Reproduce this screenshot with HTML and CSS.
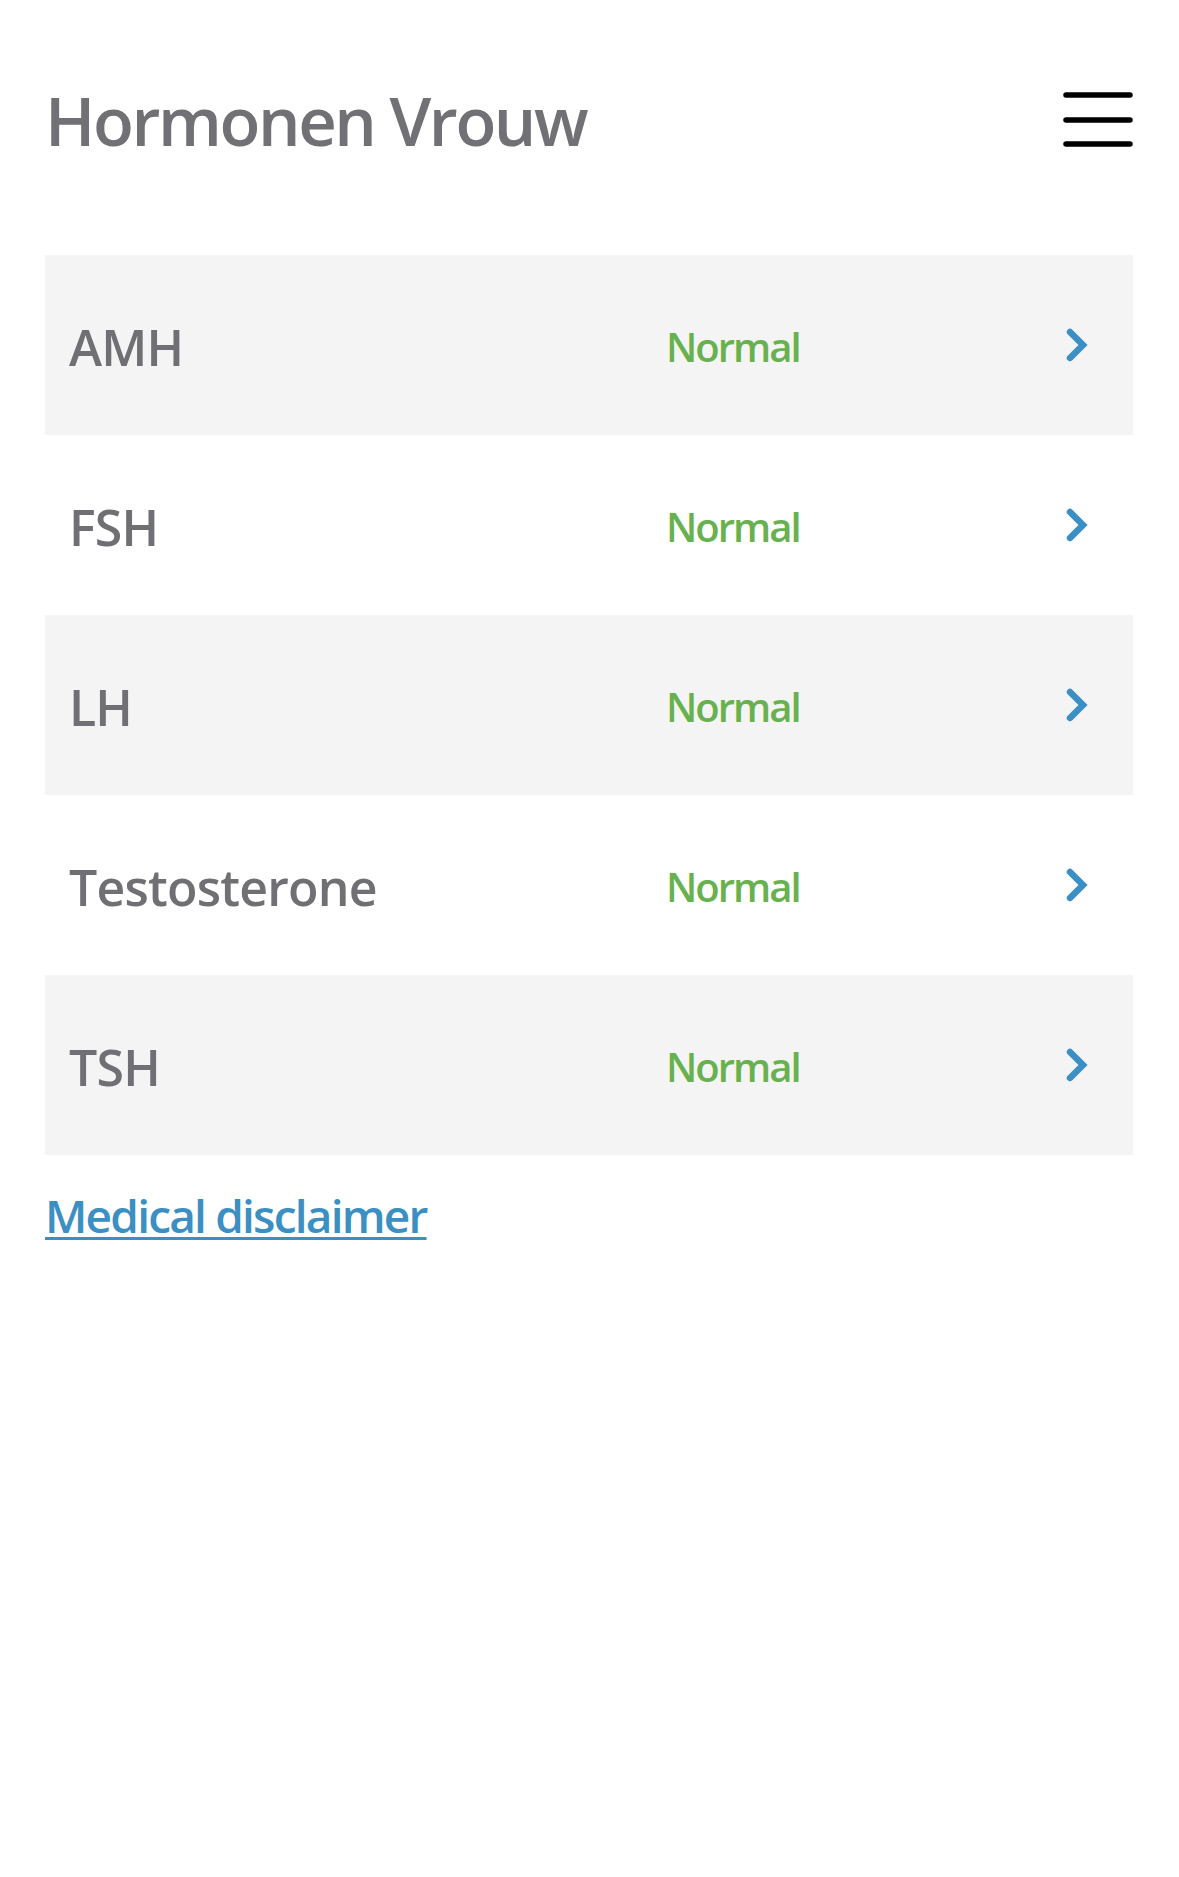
FILE: index.html
```html
<!DOCTYPE html>
<html lang="nl">
<head>
<meta charset="utf-8">
<title>Hormonen Vrouw</title>
<link rel="stylesheet" href="styles.css">
</head>
<body>
<div class="page">
  <header class="header">
    <h1 class="title">Hormonen Vrouw</h1>
    <button class="menu" aria-label="Menu">
      <svg width="70" height="60" viewBox="0 0 70 60">
        <g stroke="#000" stroke-width="5.5" stroke-linecap="round">
          <line x1="3" y1="6" x2="67" y2="6"/>
          <line x1="3" y1="31" x2="67" y2="31"/>
          <line x1="3" y1="55" x2="67" y2="55"/>
        </g>
      </svg>
    </button>
  </header>
  <ul class="list">
    <li class="row shaded"><span class="name">AMH</span><span class="status">Normal</span><svg class="chev" width="22" height="34" viewBox="0 0 22 34"><polyline points="4,4 17,17 4,30" fill="none" stroke="#3a8fc4" stroke-width="6.5" stroke-linecap="round" stroke-linejoin="miter"/></svg></li>
    <li class="row"><span class="name">FSH</span><span class="status">Normal</span><svg class="chev" width="22" height="34" viewBox="0 0 22 34"><polyline points="4,4 17,17 4,30" fill="none" stroke="#3a8fc4" stroke-width="6.5" stroke-linecap="round" stroke-linejoin="miter"/></svg></li>
    <li class="row shaded"><span class="name">LH</span><span class="status">Normal</span><svg class="chev" width="22" height="34" viewBox="0 0 22 34"><polyline points="4,4 17,17 4,30" fill="none" stroke="#3a8fc4" stroke-width="6.5" stroke-linecap="round" stroke-linejoin="miter"/></svg></li>
    <li class="row"><span class="name">Testosterone</span><span class="status">Normal</span><svg class="chev" width="22" height="34" viewBox="0 0 22 34"><polyline points="4,4 17,17 4,30" fill="none" stroke="#3a8fc4" stroke-width="6.5" stroke-linecap="round" stroke-linejoin="miter"/></svg></li>
    <li class="row shaded"><span class="name">TSH</span><span class="status">Normal</span><svg class="chev" width="22" height="34" viewBox="0 0 22 34"><polyline points="4,4 17,17 4,30" fill="none" stroke="#3a8fc4" stroke-width="6.5" stroke-linecap="round" stroke-linejoin="miter"/></svg></li>
  </ul>
  <a class="disclaimer" href="#">Medical disclaimer</a>
</div>
</body>
</html>
```
FILE: styles.css
```css
html, body {
  margin: 0;
  padding: 0;
  background: #ffffff;
}
body {
  font-family: "Open Sans", "Noto Sans", sans-serif;
  width: 1179px;
  height: 1877px;
}
.page {
  padding: 80px 46px 0 45px;
}
.header {
  display: flex;
  justify-content: space-between;
  align-items: flex-start;
  height: 175px;
}
.title {
  margin: 0;
  font-size: 67px;
  line-height: 80px;
  font-weight: 600;
  color: #717175;
  letter-spacing: -2.4px;
}
.menu {
  border: 0;
  padding: 0;
  margin: 9px 0 0 0;
  background: none;
  display: block;
  width: 70px;
  height: 60px;
}
.menu svg { display: block; }
.list {
  list-style: none;
  margin: 0;
  padding: 0;
}
.row {
  box-sizing: border-box;
  display: grid;
  grid-template-columns: 597px 1fr 22px;
  align-items: center;
  height: 180px;
  padding: 4px 45px 0 24px;
  background: #ffffff;
}
.row.shaded {
  background: #f4f4f4;
}
.name {
  font-size: 50px;
  line-height: 1;
  font-weight: 600;
  color: #707074;
  letter-spacing: -0.8px;
}
.status {
  font-size: 40px;
  line-height: 1;
  font-weight: 600;
  color: #68b14f;
  letter-spacing: -2px;
}
.chev {
  display: block;
  margin-top: -4px;
}
.disclaimer {
  display: inline-block;
  margin-top: 33px;
  font-size: 46px;
  line-height: 55px;
  font-weight: 600;
  color: #3b8fc2;
  letter-spacing: -1.8px;
  text-decoration: underline;
  text-decoration-thickness: 3px;
  text-underline-offset: 4px;
}
```
